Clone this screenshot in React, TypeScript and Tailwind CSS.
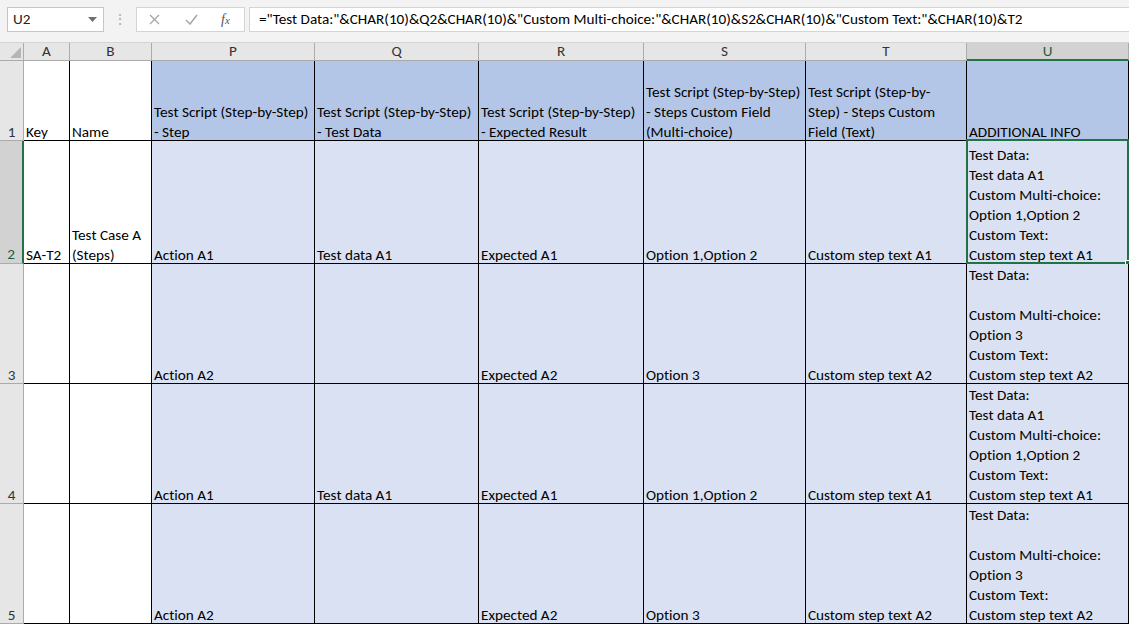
import React from "react";

const FONT = { fontFamily: 'Calibri, Carlito, "Liberation Sans", Arial, sans-serif' };

const cols = [
  { key: "A", w: "w-[46px]", white: true },
  { key: "B", w: "w-[82px]", white: true },
  { key: "P", w: "w-[163px]" },
  { key: "Q", w: "w-[164px]" },
  { key: "R", w: "w-[165px]" },
  { key: "S", w: "w-[162px]" },
  { key: "T", w: "w-[161px]" },
  { key: "U", w: "w-[162px]" },
];

const stepA1 = ["Test Data:", "Test data A1", "Custom Multi-choice:", "Option 1,Option 2", "Custom Text:", "Custom step text A1"];
const stepA2 = ["Test Data:", "", "Custom Multi-choice:", "Option 3", "Custom Text:", "Custom step text A2"];

const rows: { n: number; h: string; cells: string[][] }[] = [
  {
    n: 1,
    h: "h-[80px]",
    cells: [
      ["Key"],
      ["Name"],
      ["Test Script (Step-by-Step)", "- Step"],
      ["Test Script (Step-by-Step)", "- Test Data"],
      ["Test Script (Step-by-Step)", "- Expected Result"],
      ["Test Script (Step-by-Step)", "- Steps Custom Field", "(Multi-choice)"],
      ["Test Script (Step-by-", "Step) - Steps Custom", "Field (Text)"],
      ["ADDITIONAL INFO"],
    ],
  },
  {
    n: 2,
    h: "h-[123px]",
    cells: [
      ["SA-T2"],
      ["Test Case A", "(Steps)"],
      ["Action A1"],
      ["Test data A1"],
      ["Expected A1"],
      ["Option 1,Option 2"],
      ["Custom step text A1"],
      stepA1,
    ],
  },
  {
    n: 3,
    h: "h-[120px]",
    cells: [[], [], ["Action A2"], [], ["Expected A2"], ["Option 3"], ["Custom step text A2"], stepA2],
  },
  {
    n: 4,
    h: "h-[120px]",
    cells: [[], [], ["Action A1"], ["Test data A1"], ["Expected A1"], ["Option 1,Option 2"], ["Custom step text A1"], stepA1],
  },
  {
    n: 5,
    h: "h-[120px]",
    cells: [[], [], ["Action A2"], [], ["Expected A2"], ["Option 3"], ["Custom step text A2"], stepA2],
  },
];

function FormulaBar() {
  return (
    <div className="h-[43px] bg-[#f3f3f3] flex items-start pt-[7px] border-b border-[#d4d4d4]">
      {/* name box */}
      <div className="ml-[7px] w-[97px] h-[25px] bg-white border border-[#c6c6c6] flex items-center justify-between pl-[5px] pr-[6px] text-[15.2px] text-[#222]">
        <span>U2</span>
        <svg width="9" height="5" viewBox="0 0 9 5">
          <polygon points="0,0 9,0 4.5,5" fill="#6f6f6f" />
        </svg>
      </div>
      <div className="w-[32px] h-[25px] flex items-center justify-center text-[#a8a8a8] text-[14px]">⋮</div>
      {/* cancel / enter / fx */}
      <div className="w-[109px] h-[25px] bg-white border border-[#d4d4d4] flex items-center">
        <svg className="ml-[12px]" width="11" height="11" viewBox="0 0 11 11">
          <path d="M1 1 L10 10 M10 1 L1 10" stroke="#a6a6a6" strokeWidth="1.3" fill="none" />
        </svg>
        <svg className="ml-[25px]" width="13" height="11" viewBox="0 0 13 11">
          <path d="M1 6 L5 10 L12 1" stroke="#a6a6a6" strokeWidth="1.5" fill="none" />
        </svg>
        <span
          className="ml-[23px] text-[14px] italic text-[#555]"
          style={{ fontFamily: '"Liberation Serif", "Times New Roman", serif' }}
        >
          f<span className="text-[11px]">x</span>
        </span>
      </div>
      <div className="ml-[4px] flex-1 h-[25px] bg-white border border-[#d4d4d4] border-r-0 flex items-center pl-[9px] text-[15.2px] text-black whitespace-nowrap overflow-hidden">
        ="Test Data:"&amp;CHAR(10)&amp;Q2&amp;CHAR(10)&amp;"Custom Multi-choice:"&amp;CHAR(10)&amp;S2&amp;CHAR(10)&amp;"Custom Text:"&amp;CHAR(10)&amp;T2
      </div>
    </div>
  );
}

function ColumnHeaders() {
  return (
    <div className="flex h-[18px]">
      <div className="w-[24px] h-full bg-[#e6e6e6] border-r border-b border-[#ababab] flex items-end justify-end p-[2px]">
        <svg width="11" height="11" viewBox="0 0 11 11">
          <polygon points="11,0 11,11 0,11" fill="#b5b5b5" />
        </svg>
      </div>
      {cols.map((c) =>
        c.key === "U" ? (
          <div
            key={c.key}
            className={`${c.w} h-full bg-[#d2d2d2] border-r border-[#ababab] border-b-2 border-b-[#217346] flex items-center justify-center text-[15.2px] text-[#1e5c39]`}
          >
            {c.key}
          </div>
        ) : (
          <div
            key={c.key}
            className={`${c.w} h-full bg-[#e6e6e6] border-r border-b border-[#ababab] flex items-center justify-center text-[15.2px] text-[#333]`}
          >
            {c.key}
          </div>
        )
      )}
    </div>
  );
}

function Lines({ lines }: { lines: string[] }) {
  return (
    <div className="flex flex-col justify-end h-full pl-[2px] overflow-hidden">
      {lines.map((l, i) => (
        <div key={i} className="leading-[24px] h-[20px] whitespace-nowrap text-[15.2px] text-black">
          {l === "" ? "\u00a0" : l}
        </div>
      ))}
    </div>
  );
}

export default function App() {
  return (
    <div className="w-[1129px] h-[625px] overflow-hidden bg-white [font-variant-ligatures:none]" style={FONT}>
      <FormulaBar />
      <ColumnHeaders />
      {rows.map((r) => {
        const selectedRow = r.n === 2;
        return (
          <div key={r.n} className={`flex ${r.h}`}>
            {selectedRow ? (
              <div className="w-[24px] h-full bg-[#d2d2d2] border-r-2 border-r-[#217346] border-b border-[#ababab] flex items-end justify-center text-[15.2px] text-[#1e5c39] leading-[20px] pb-[1px]">
                <span className="h-[20px] leading-[24px]">{r.n}</span>
              </div>
            ) : (
              <div className="w-[24px] h-full bg-[#e6e6e6] border-r border-b border-[#ababab] flex items-end justify-center text-[15.2px] text-[#333] leading-[20px]">
                <span className="h-[20px] leading-[24px]">{r.n}</span>
              </div>
            )}
            {cols.map((c, i) => {
              const bg = c.white ? "bg-white" : r.n === 1 ? "bg-[#b4c6e7]" : "bg-[#d9e1f2]";
              const selected = selectedRow && c.key === "U";
              return (
                <div key={c.key} className={`${c.w} h-full ${bg} border-r border-b border-black relative`}>
                  <Lines lines={r.cells[i]} />
                  {selected && (
                    <>
                      <div className="absolute -left-[1px] -top-[2px] -right-[1px] -bottom-[1px] border-2 border-[#217346] pointer-events-none" />
                      <div className="absolute -right-[4px] -bottom-[4px] w-[7px] h-[7px] bg-[#217346] border border-white" />
                    </>
                  )}
                </div>
              );
            })}
          </div>
        );
      })}
    </div>
  );
}
